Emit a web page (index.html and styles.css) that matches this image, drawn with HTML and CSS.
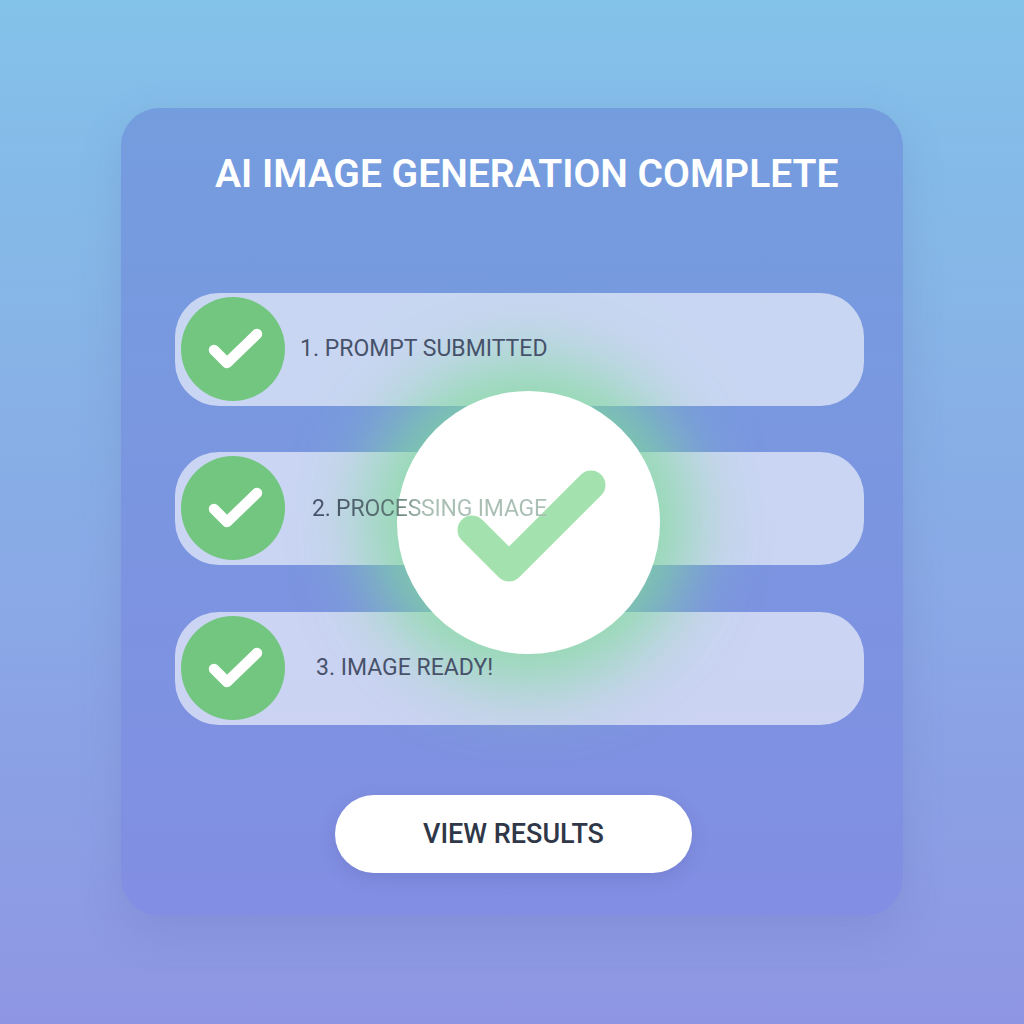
FILE: index.html
```html
<!DOCTYPE html>
<html lang="en">
<head>
  <meta charset="UTF-8" />
  <meta name="viewport" content="width=device-width, initial-scale=1.0"/>
  <title>AI Image Generation Complete</title>
  <link rel="stylesheet" href="styles.css">
</head>
<body>
  <main class="card">
    <h1 class="title">AI IMAGE GENERATION COMPLETE</h1>

    <div class="steps">
      <div class="step">
        <span class="step-icon">
          <svg viewBox="0 0 104 104"><path d="M33 53 L46 66 L76 37"/></svg>
        </span>
        <span class="step-label step-label-1">1. PROMPT SUBMITTED</span>
      </div>
      <div class="step">
        <span class="step-icon">
          <svg viewBox="0 0 104 104"><path d="M33 53 L46 66 L76 37"/></svg>
        </span>
        <span class="step-label step-label-2">2. PROCESSING IMAGE</span>
      </div>
      <div class="step">
        <span class="step-icon">
          <svg viewBox="0 0 104 104"><path d="M33 53 L46 66 L76 37"/></svg>
        </span>
        <span class="step-label step-label-3">3. IMAGE READY!</span>
      </div>
    </div>

    <button class="results-btn">VIEW RESULTS</button>

    <!-- big success badge sits over the steps -->
    <div class="success">
      <svg viewBox="0 0 263 263"><path d="M75 139 L112 176 L194 94"/></svg>
    </div>
  </main>
</body>
</html>
```

FILE: styles.css
```css
* {
  box-sizing: border-box;
}

body {
  margin: 0;
  width: 1024px;
  height: 1024px;
  padding: 108px 121px 108px 121px;
  overflow: hidden;
  background: linear-gradient(to bottom, #83c2e9, #8e96e3);
  font-family: Roboto, "Liberation Sans", sans-serif;
}

.card {
  position: relative;
  display: flex;
  flex-direction: column;
  width: 782px;
  height: 808px;
  padding: 46px 39px 0 54px;
  border-radius: 38px;
  background: linear-gradient(to bottom, #749dde, #828ee3);
  box-shadow: 0 16px 44px rgba(90, 100, 160, 0.2);
}

.title {
  margin: 0 0 0 40px;
  color: #fff;
  font-size: 39px;
  font-weight: 600;
  line-height: 40px;
  white-space: nowrap;
}

.steps {
  display: flex;
  flex-direction: column;
  gap: 46.4px;
  margin-top: 99px;
}

.step {
  display: flex;
  align-items: center;
  height: 113px;
  padding-left: 6px;
  border-radius: 44px;
  background: rgba(255, 255, 255, 0.6);
}

.step-icon {
  flex: none;
  width: 104px;
  height: 104px;
  margin-top: -1px;
  border-radius: 50%;
  background: #72c67f;
}

.step-icon svg {
  display: block;
}

.step-icon path {
  fill: none;
  stroke: #fff;
  stroke-width: 10.5;
  stroke-linecap: round;
  stroke-linejoin: round;
}

.step-label {
  position: relative;
  z-index: 2;
  margin-bottom: 3px;
  color: #47526a;
  font-size: 23px;
  white-space: nowrap;
}

.step-label-1 {
  margin-left: 15px;
}

.step-label-2 {
  margin-left: 27px;
  margin-bottom: 1px;
  letter-spacing: -0.2px;
  background: linear-gradient(to right, #47526a 8%, #5d7a74 35%, #a9bfb4 48%);
  -webkit-background-clip: text;
  background-clip: text;
  color: transparent;
}

.step-label-3 {
  margin-left: 31px;
  margin-bottom: 1px;
}

.results-btn {
  align-self: center;
  width: 357px;
  height: 78px;
  margin: 70px 0 0 -12px;
  border: none;
  border-radius: 39px;
  background: #fff;
  box-shadow: 0 6px 18px rgba(70, 70, 140, 0.18);
  color: #2f3748;
  font-family: inherit;
  font-size: 27px;
  font-weight: 500;
}

.success {
  position: absolute;
  left: 276px;
  top: 283px;
  z-index: 1;
  width: 263px;
  height: 263px;
  border-radius: 50%;
  background: #fff;
  box-shadow: 0 0 72px 30px rgba(125, 220, 150, 0.78);
}

.success svg {
  display: block;
}

.success path {
  fill: none;
  stroke: #a3e2ae;
  stroke-width: 29;
  stroke-linecap: round;
  stroke-linejoin: round;
}
```
